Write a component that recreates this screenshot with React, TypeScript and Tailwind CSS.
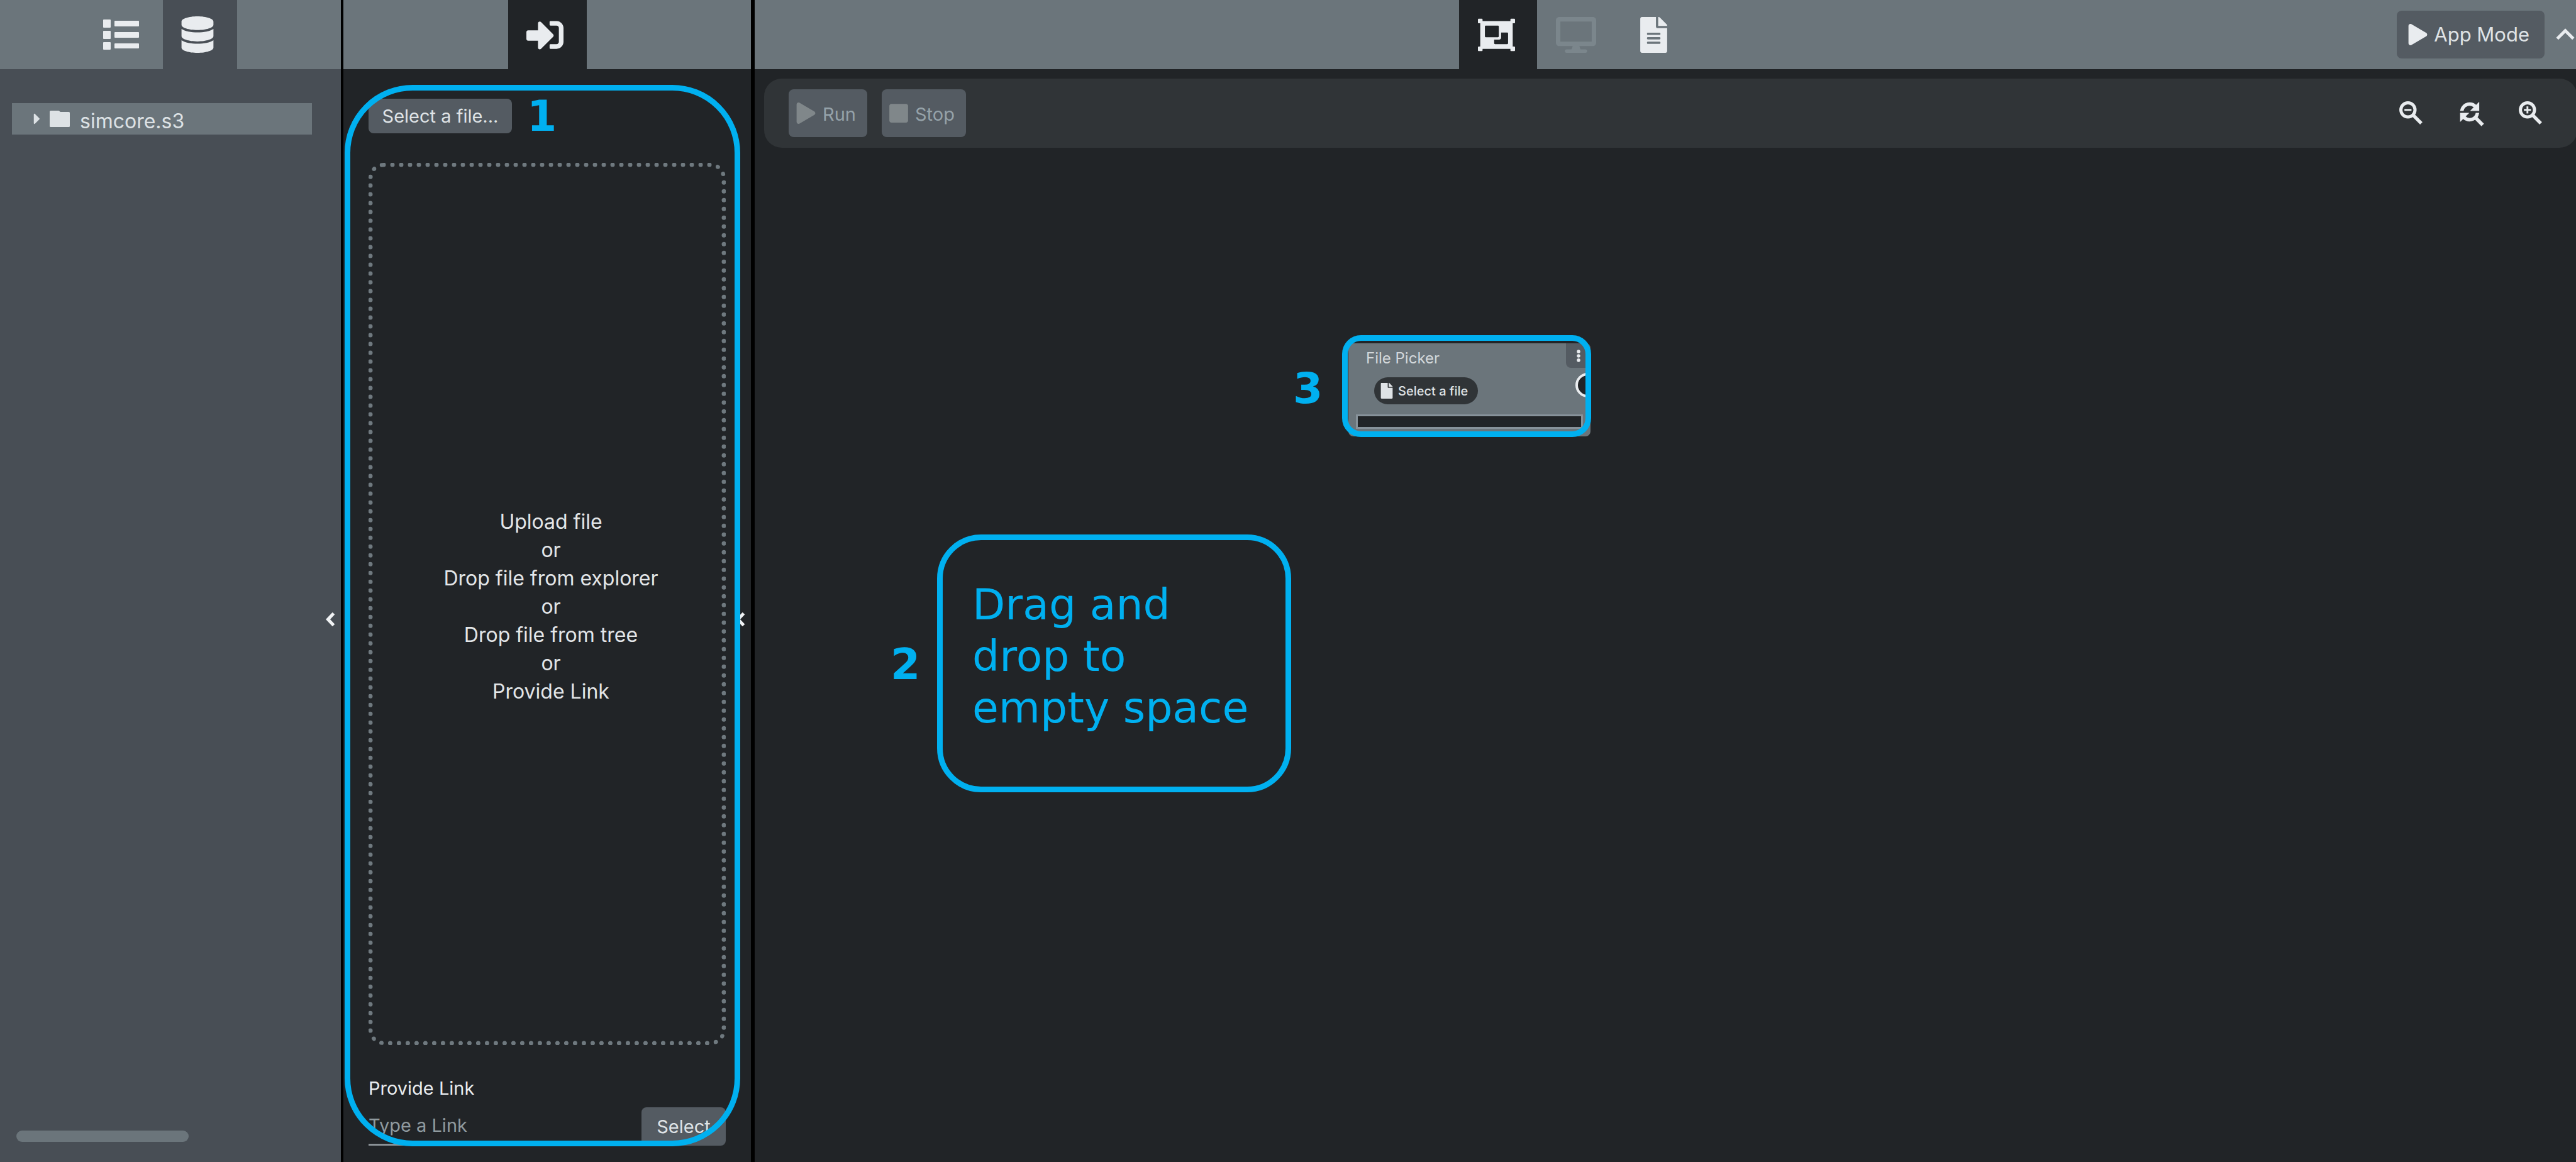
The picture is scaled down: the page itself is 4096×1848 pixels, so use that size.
import type { ReactNode } from "react";
import {
  FaCaretRight,
  FaDatabase,
  FaDesktop,
  FaEllipsisV,
  FaFile,
  FaFileAlt,
  FaObjectGroup,
  FaPlay,
  FaSignInAlt,
  FaStop,
} from "react-icons/fa";
import { MdKeyboardArrowUp } from "react-icons/md";

function ListIcon() {
  return (
    <svg viewBox="0 0 57 48" className="h-[48px] w-[57px]" fill="currentColor" aria-hidden="true">
      <rect x="0" y="0" width="12" height="13" rx="1" />
      <rect x="0" y="18" width="12" height="13" rx="1" />
      <rect x="0" y="36" width="12" height="12" rx="1" />
      <rect x="18" y="2" width="39" height="9" rx="1" />
      <rect x="18" y="20" width="39" height="9" rx="1" />
      <rect x="18" y="38" width="39" height="8" rx="1" />
    </svg>
  );
}

function FolderIcon() {
  return (
    <svg viewBox="0 0 32 26" className="ml-3 h-[26px] w-8" fill="currentColor" aria-hidden="true">
      <path d="M1.500 0H14.500L17 2H30.500A1.500 1.500 0 0 1 32 3.500V24.500A1.500 1.500 0 0 1 30.500 26H1.500A1.500 1.500 0 0 1 0 24.500V1.500A1.500 1.500 0 0 1 1.500 0Z" />
    </svg>
  );
}

function ZoomIcon({ plus = false }: { plus?: boolean }) {
  return (
    <svg viewBox="0 0 24 24" className="size-[50px]" fill="none" stroke="currentColor" aria-hidden="true">
      <circle cx="9.500" cy="9.500" r="5.400" strokeWidth="2.400" />
      <path d="M13.600 13.600L19.700 19.700" strokeWidth="2.600" />
      <path d="M6.800 9.500H12.200" strokeWidth="1.400" />
      {plus && <path d="M9.500 6.800V12.200" strokeWidth="1.400" />}
    </svg>
  );
}

function ResetZoomIcon() {
  return (
    <svg
      viewBox="0 0 24 24"
      className="size-[50px]"
      fill="currentColor"
      stroke="currentColor"
      strokeWidth="0.600"
      aria-hidden="true"
    >
      <path d="M11 6c1.380 0 2.630.56 3.540 1.460L12 10h6V4l-2.050 2.050A6.976 6.976 0 0 0 11 4c-3.530 0-6.430 2.610-6.920 6H6.100A5 5 0 0 1 11 6zm5.640 9.140A6.890 6.890 0 0 0 17.920 12H15.900a5 5 0 0 1-4.900 4c-1.380 0-2.630-.56-3.540-1.460L10 12H4v6l2.050-2.050A6.976 6.976 0 0 0 11 18c1.550 0 2.980-.51 4.140-1.360L20 21.490 21.490 20l-4.850-4.860z" />
    </svg>
  );
}

function CollapseHandle({ label }: { label: string }) {
  return (
    <div className="absolute inset-y-0 right-[9px] flex items-center pt-3">
      <button type="button" aria-label={label} className="text-[#f1f3f5]">
        <svg viewBox="0 0 16 22" className="h-[22px] w-[16px]" fill="none" stroke="currentColor" strokeWidth="5" aria-hidden="true">
          <path d="M13.500 1.500L4.500 11L13.500 20.500" />
        </svg>
      </button>
    </div>
  );
}

function ToolButton({ icon, children }: { icon: ReactNode; children: ReactNode }) {
  return (
    <button
      type="button"
      disabled
      className="flex h-[76px] items-center gap-[11px] rounded-lg bg-[#545b62] pr-[18px] pl-3 text-[29px] leading-10 text-[#95a2a9]"
    >
      <span className="text-[#80878a]">{icon}</span>
      <span className="pt-1">{children}</span>
    </button>
  );
}

function TreeSidebar() {
  return (
    <aside className="flex flex-col border-r-4 border-black bg-[#484e55]">
      <nav className="flex h-[110px] shrink-0 gap-2 bg-[#6b757b] pl-[133px]">
        <button type="button" aria-label="Nodes" className="flex w-[118px] items-center justify-center">
          <ListIcon />
        </button>
        <button
          type="button"
          aria-label="Data"
          className="flex w-[118px] items-center justify-center bg-[#484e55] pr-2"
        >
          <FaDatabase size={58} />
        </button>
      </nav>
      <div className="relative flex grow flex-col pt-[54px] pb-8">
        <button
          type="button"
          className="mr-[46px] ml-[19px] flex h-[50px] items-center bg-[#6b757b] pl-8 text-[#dde2e5]"
        >
          <FaCaretRight size={28} className="w-[16px]" />
          <FolderIcon />
          <span className="pt-2 pl-4 text-[32px] leading-10">simcore.s3</span>
        </button>
        <div className="mt-auto ml-[26px] h-[18px] w-[274px] rounded-full bg-[#6b757b]" />
        <CollapseHandle label="Collapse tree" />
      </div>
    </aside>
  );
}

function FilePanel() {
  const lines = [
    "Upload file",
    "or",
    "Drop file from explorer",
    "or",
    "Drop file from tree",
    "or",
    "Provide Link",
  ];
  return (
    <section className="flex flex-col border-r-[6px] border-black bg-[#212427]">
      <nav className="flex h-[110px] shrink-0 justify-center bg-[#6b757b]">
        <button
          type="button"
          aria-label="Inputs"
          className="flex w-[125px] items-center justify-center bg-[#212427] pr-2"
        >
          <FaSignInAlt size={59} />
        </button>
      </nav>
      <div className="relative flex grow flex-col px-10 pt-[47px] pb-[26px]">
        <div className="flex h-[55px] items-center gap-6">
          <button
            type="button"
            className="h-[55px] w-[228px] rounded-lg bg-[#545b62] text-[29px] leading-10 text-[#dfe3e6]"
          >
            Select a file...
          </button>
          <span className="font-['DejaVu_Sans',sans-serif] text-[68px] leading-[68px] font-bold text-[#00b0f0]">1</span>
        </div>
        <div className="mt-[47px] flex grow items-center justify-center rounded-[24px] border-[7px] border-dotted border-[#6f797f] pt-2 pl-3 text-center text-[32px] leading-[45px] text-[#e3e6e8]">
          <div>
            {lines.map((line, index) => (
              <p key={index}>{line}</p>
            ))}
          </div>
        </div>
        <label htmlFor="link" className="mt-[49px] mb-[10px] text-[29px] leading-10">
          Provide Link
        </label>
        <div className="flex h-[61px] gap-[10px]">
          <input
            id="link"
            type="text"
            placeholder="Type a Link"
            className="min-w-0 grow border-b-[3px] border-[#8a9196] bg-transparent text-[29px] leading-10 outline-none placeholder:text-[#8f9a9f]"
          />
          <button
            type="button"
            className="w-[134px] shrink-0 rounded-lg bg-[#545b62] text-[29px] leading-10 text-[#dfe3e6]"
          >
            Select
          </button>
        </div>
        <CollapseHandle label="Collapse panel" />
        <div className="pointer-events-none absolute top-[25px] right-[17px] bottom-[25px] left-[2px] rounded-[108px] border-[9px] border-[#00b0f0]" />
      </div>
    </section>
  );
}

function FilePickerNode() {
  return (
    <article className="absolute top-[311px] left-[944px] w-[385px] overflow-hidden rounded-lg bg-[#6b757b] pb-3">
      <header className="flex h-[39px] justify-between pl-7">
        <h2 className="pt-[6px] text-[24px] leading-9 text-[#d3d8db]">File Picker</h2>
        <button
          type="button"
          aria-label="Node menu"
          className="flex w-[39px] items-center justify-center rounded-bl-lg bg-[#545b62]"
        >
          <FaEllipsisV size={20} />
        </button>
      </header>
      <button
        type="button"
        className="mt-[15px] ml-[41px] flex h-[43px] items-center gap-2 rounded-full bg-[#303437] pr-4 pl-[10px] text-[20px] leading-8 font-medium text-[#dfe3e6]"
      >
        <FaFile size={25} className="w-5" />
        Select a file
      </button>
      <div className="mx-3 mt-4 h-[23px] border-[3px] border-[#87929a] bg-[#212427]" />
      <span className="absolute top-[47px] left-[361px] size-[39px] rounded-full border-4 border-[#e9ecef] bg-[#212427]" />
    </article>
  );
}

function Workbench() {
  return (
    <main className="flex min-w-0 flex-col overflow-hidden bg-[#212427]">
      <header className="flex h-[110px] shrink-0 items-center bg-[#6b757b]">
        <nav className="flex h-full grow justify-center">
          <button
            type="button"
            aria-label="Workbench"
            className="flex w-[124px] items-center justify-center bg-[#212427] pr-1"
          >
            <FaObjectGroup size={59} />
          </button>
          <button
            type="button"
            disabled
            aria-label="App view"
            className="flex w-[124px] items-center justify-center text-[#7b868c]"
          >
            <FaDesktop size={57} className="w-[64px]" />
          </button>
          <button type="button" aria-label="Slides" className="flex w-[124px] items-center justify-center">
            <FaFileAlt size={57} />
          </button>
        </nav>
        <button
          type="button"
          className="flex h-[76px] items-center gap-[10px] rounded-lg bg-[#545b62] pr-6 pl-[18px] text-[31px] leading-10 text-[#dfe3e6]"
        >
          <FaPlay size={34} className="w-[31px] text-[#e9ecef]" />
          App Mode
        </button>
        <button type="button" aria-label="Collapse header" className="flex w-[50px] overflow-hidden pl-1">
          <MdKeyboardArrowUp size={58} className="shrink-0" />
        </button>
      </header>
      <div className="pt-[15px] pl-[15px]">
        <div className="-mr-[2px] flex h-[110px] items-center gap-[23px] rounded-[28px] bg-[#303437] pr-[49px] pl-[39px]">
          <ToolButton icon={<FaPlay size={34} className="w-[31px]" />}>Run</ToolButton>
          <ToolButton icon={<FaStop size={34} className="w-[30px]" />}>Stop</ToolButton>
          <div className="ml-auto flex gap-[45px]">
            <button type="button" aria-label="Zoom out">
              <ZoomIcon />
            </button>
            <button type="button" aria-label="Reset zoom">
              <ResetZoomIcon />
            </button>
            <button type="button" aria-label="Zoom in">
              <ZoomIcon plus />
            </button>
          </div>
        </div>
      </div>
      <div className="relative grow">
        <FilePickerNode />
        <div className="pointer-events-none absolute top-[298px] left-[934px] h-[162px] w-[396px] rounded-[30px] border-[9px] border-[#00b0f0]" />
        <span className="absolute top-[349px] left-[856px] font-['DejaVu_Sans',sans-serif] text-[68px] leading-[68px] font-bold text-[#00b0f0]">
          3
        </span>
        <span className="absolute top-[788px] left-[216px] font-['DejaVu_Sans',sans-serif] text-[68px] leading-[68px] font-bold text-[#00b0f0]">
          2
        </span>
        <p className="absolute top-[615px] left-[290px] h-[410px] w-[563px] rounded-[70px] border-[9px] border-[#00b0f0] pt-[62px] pl-[47px] font-['DejaVu_Sans',sans-serif] text-[68px] leading-[82px] text-[#00b0f0]">
          Drag and
          <br />
          drop to
          <br />
          empty space
        </p>
      </div>
    </main>
  );
}

export default function App() {
  return (
    <div className="grid h-screen grid-cols-[546px_654px_1fr] overflow-hidden bg-[#212427] font-['Inter',sans-serif] text-[#e9ecef]">
      <TreeSidebar />
      <FilePanel />
      <Workbench />
    </div>
  );
}
